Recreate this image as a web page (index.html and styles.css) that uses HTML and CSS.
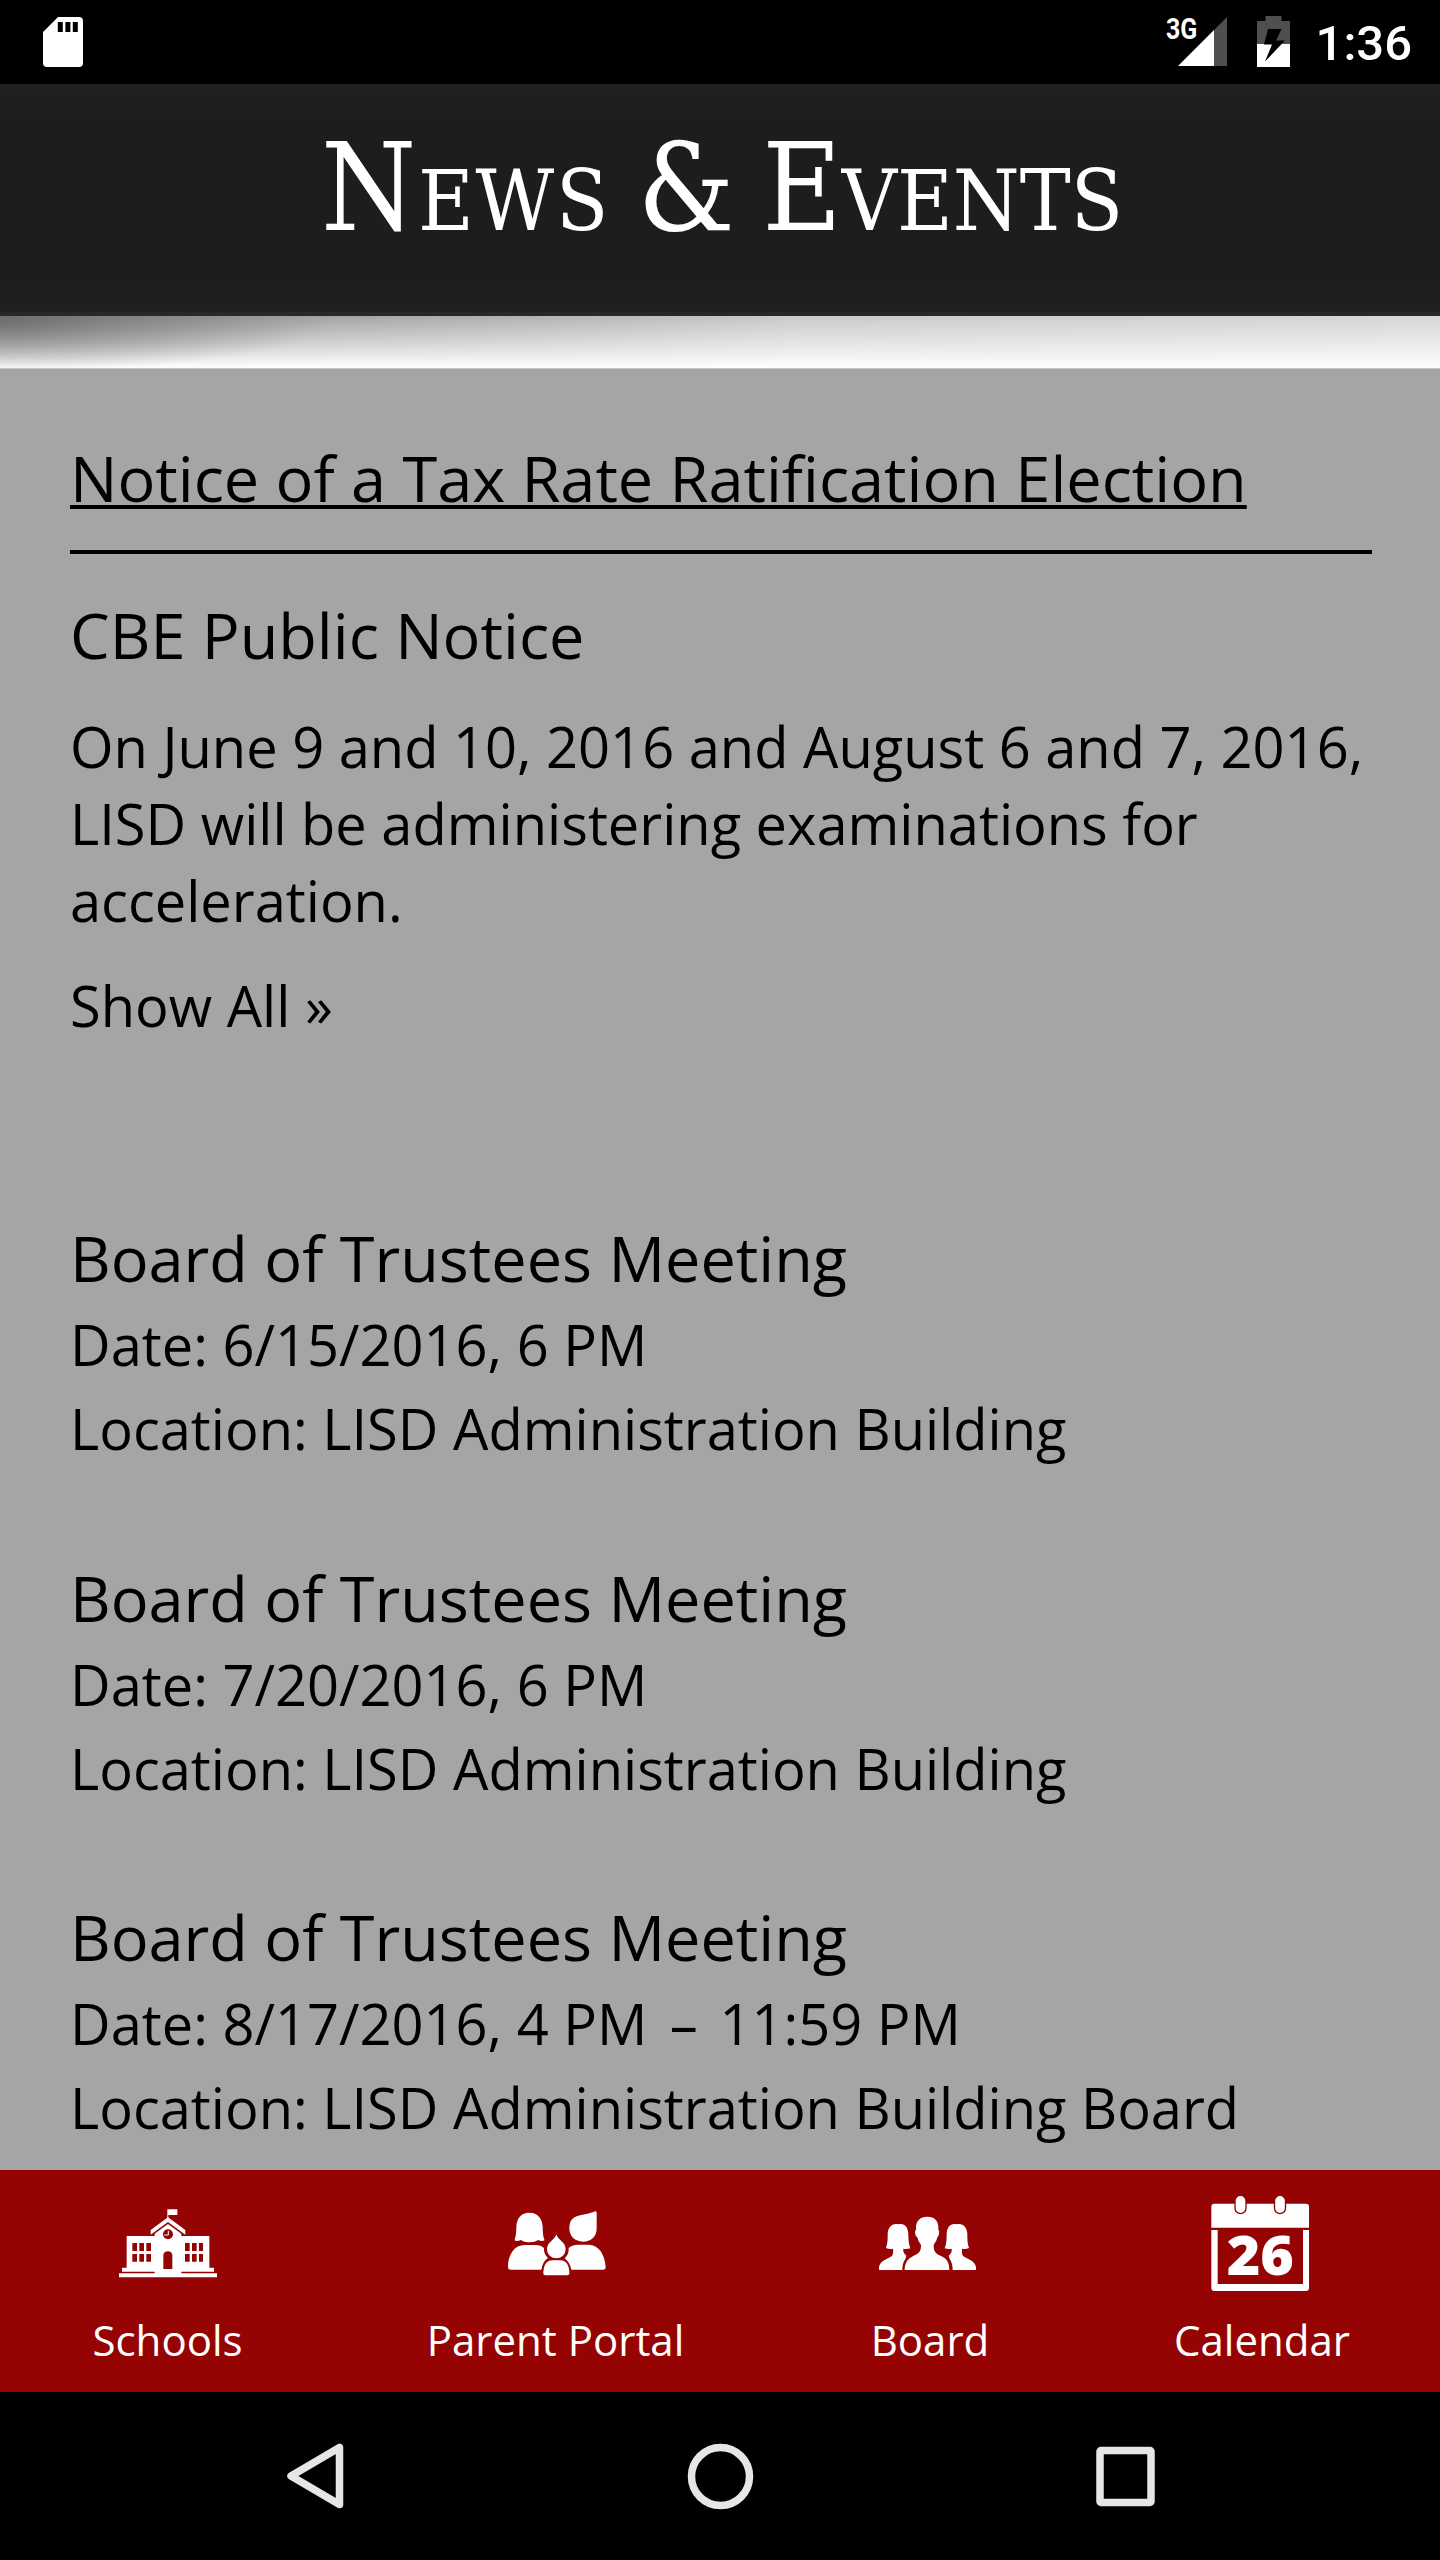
FILE: index.html
```html
<!DOCTYPE html>
<html lang="en">
<head>
<meta charset="utf-8">
<title>News &amp; Events</title>
<link rel="stylesheet" href="styles.css">
</head>
<body>
<div class="screen">
  <div class="status">
    <svg class="sd" viewBox="0 0 40 50" aria-hidden="true">
      <path fill="#fff" fill-rule="evenodd" d="M15 0H36a4 4 0 0 1 4 4V46a4 4 0 0 1-4 4H4a4 4 0 0 1-4-4V15ZM14.800 5v10h5V5ZM22.400 5v10h5V5ZM29.800 5v10h5V5Z"/>
    </svg>
    <div class="signal">
      <span class="net">3G</span>
      <svg class="bars" viewBox="0 0 49 49" aria-hidden="true">
        <path fill="#4f4f4f" d="M36 13 49 0V49H36Z"/>
        <path fill="#fff" d="M0 49 36 13V49Z"/>
      </svg>
    </div>
    <svg class="battery" viewBox="0 0 33 51" aria-hidden="true">
      <path fill="#4f4f4f" d="M8.500 0H24.500V5H33V28H0V5H8.500Z"/>
      <path fill="#fff" d="M0 28H33V51H0Z"/>
      <path fill="#000" d="M11 13H24.500L19 24.500H28L8 45.500 15 28.500H7Z"/>
    </svg>
    <span class="clock">1:36</span>
  </div>

  <header class="header"><h1><span class="first">News</span> &amp; Events</h1></header>
  <div class="band"></div>

  <main class="content">
    <h2 class="title"><a href="#">Notice of a Tax Rate Ratification Election</a></h2>
    <hr>
    <h2 class="title">CBE Public Notice</h2>
    <p class="body">On June 9 and 10, 2016 and August 6 and 7, 2016, LISD will be administering examinations for acceleration.</p>
    <p class="more">Show All »</p>

    <div class="events">
      <article>
        <h2 class="title">Board of Trustees Meeting</h2>
        <p>Date: 6/15/2016, 6 PM</p>
        <p>Location: LISD Administration Building</p>
      </article>
      <article>
        <h2 class="title">Board of Trustees Meeting</h2>
        <p>Date: 7/20/2016, 6 PM</p>
        <p>Location: LISD Administration Building</p>
      </article>
      <article>
        <h2 class="title">Board of Trustees Meeting</h2>
        <p>Date: 8/17/2016, 4 PM <span class="dash">–</span> 11:59 PM</p>
        <p>Location: LISD Administration Building Board</p>
      </article>
    </div>
  </main>

  <nav class="tabs">
    <a class="tab">
      <svg viewBox="114 42 300 300" aria-hidden="true">
        <g fill="#fff">
          <path d="M262 88H292V105H265V116H262Z"/>
          <path d="M264 112 316 150V164L264 126 212 164V150Z"/>
          <path d="M264 132 304 161V168H388V263H402V275H304V280H411V292H117V280H224V275H126V263H140V168H224V161Z"/>
        </g>
        <g fill="#960303">
          <circle cx="264" cy="163" r="15"/>
          <path d="M250 267V224a14 14 0 0 1 27 0V267Z"/>
          <path d="M157 189h14v24h-14zM178 189h14v24h-14zM199 189h14v24h-14zM157 222h14v23h-14zM178 222h14v23h-14zM199 222h14v23h-14zM315 189h14v24h-14zM336 189h14v24h-14zM357 189h12v24h-12zM315 222h14v23h-14zM336 222h14v23h-14zM357 222h12v23h-12z"/>
        </g>
        <path d="M265 152V165H253" fill="none" stroke="#fff" stroke-width="3"/>
      </svg>
      <span>Schools</span>
    </a>
    <a class="tab">
      <svg viewBox="78 42 300 300" aria-hidden="true">
        <g fill="#fff">
          <path d="M148 98C173 98 187 116 188 140C188 160 190 172 194 181Q184 185 175 180Q162 188 148 187Q134 188 122 180Q112 186 103 181C107 172 109 160 109 140C110 116 123 98 148 98Z"/>
          <path d="M84 262C84 222 104 195 134 195H166C177 195 186 199 192 204C191 218 196 227 204 234C193 241 187 252 184 269H91Q84 269 84 262Z"/>
          <path d="M346 94Q350 94 350 99V146C350 170 332 185 309 185C285 185 268 169 268 145C268 119 280 111 300 106Q325 101 340 96Q343 94 346 94Z"/>
          <path d="M377 262C375 222 355 194 326 194H294C281 194 272 198 266 204C267 218 262 227 254 235C264 243 271 253 274 269H370Q377 269 377 262Z"/>
          <path d="M229 163C233 180 257 186 257 208A28 27 0 0 1 201 208C201 186 225 180 229 163Z"/>
          <path d="M190 280C190 256 200 241 216 241H242C258 241 268 256 268 280Q268 286 262 286H196Q190 286 190 280Z"/>
        </g>
      </svg>
      <span>Parent Portal</span>
    </a>
    <a class="tab">
      <svg viewBox="87 42 300 300" aria-hidden="true">
        <g fill="#fff">
          <path d="M232 110C254 110 267 123 265 149C270 153 267 168 262 172C259 186 253 190 251 196C251 218 259 222 273 228C293 237 298 250 298 270H164C164 250 172 237 190 228C206 221 213 216 213 196C211 190 205 186 202 172C195 168 193 153 198 149C196 123 210 110 232 110Z"/>
          <path id="side" d="M145 133C167 128 175 146 175 165C175 182 177 196 181 205Q170 208 160 206C159 214 161 220 169 227L166 237C159 247 157 258 157 270H87V261C91 243 112 237 125 229Q131 222 129 206Q117 208 108 204C113 190 113 178 113 163C113 144 126 128 145 133Z"/>
          <use href="#side" transform="matrix(-1 0 0 1 465 0)"/>
        </g>
      </svg>
      <span>Board</span>
    </a>
    <a class="tab">
      <svg viewBox="93 42 300 300" aria-hidden="true">
        <path fill="#fff" d="M103 71H378Q387 71 387 80V143H94V80Q94 71 103 71Z"/>
        <path fill="#fff" d="M94 150H113V312H369V150H387V324Q387 333 378 333H103Q94 333 94 324Z"/>
        <g fill="#fff" stroke="#960303" stroke-width="4">
          <rect x="165" y="46" width="33" height="55" rx="16.500"/>
          <rect x="283.500" y="46" width="33" height="55" rx="16.500"/>
        </g>
        <text class="day" x="241" y="285" text-anchor="middle" textLength="202" lengthAdjust="spacingAndGlyphs">26</text>
      </svg>
      <span>Calendar</span>
    </a>
  </nav>

  <div class="keys">
    <svg viewBox="0 0 72 72" aria-hidden="true"><path d="M60.500 7.500V64.500L12 36Z"/></svg>
    <svg viewBox="0 0 72 72" aria-hidden="true"><circle cx="36.500" cy="36.500" r="29"/></svg>
    <svg viewBox="0 0 72 72" aria-hidden="true"><rect x="11" y="10.500" width="51" height="52" rx="1"/></svg>
  </div>
</div>
</body>
</html>
```
FILE: styles.css
```css
* { box-sizing: border-box; }

body {
  margin: 0;
  background: #000;
}

h1, h2, p { margin: 0; font-weight: 400; }

.screen {
  width: 1440px;
  height: 2560px;
  display: flex;
  flex-direction: column;
  overflow: hidden;
  font-family: "Open Sans", "Noto Sans", sans-serif;
  color: #000;
}

/* system status bar */
.status {
  height: 84px;
  flex: none;
  display: flex;
  align-items: flex-start;
  padding: 16px 28px 0 43px;
  background: #000;
  color: #fff;
  font-family: Roboto, sans-serif;
}
.sd { width: 40px; height: 50px; margin-top: 1px; }
.signal { display: flex; margin-left: auto; }
.net {
  width: 12px;
  font-size: 29px;
  font-weight: 700;
  line-height: 33px;
  margin-top: -3px;
  transform: scaleX(.86);
  transform-origin: 0 0;
}
.bars { width: 49px; height: 49px; margin-top: 1px; }
.battery { width: 33px; height: 51px; margin-left: 30px; }
.clock {
  margin-left: 25.500px;
  font-size: 49px;
  font-weight: 500;
  line-height: 56px;
}

.header {
  height: 232px;
  flex: none;
  padding-left: 4px;
  text-align: center;
  background: linear-gradient(#202020, #1d1d1d 15%, #1d1d1d 85%, #202020 98%, #282828 98.3%);
}
.header h1 {
  font-family: "DejaVu Serif Condensed", "DejaVu Serif", serif;
  font-stretch: condensed;
  font-variant: small-caps;
  font-size: 121px;
  line-height: 210px;
  word-spacing: -7px;
  color: #fff;
}
.first { letter-spacing: 1.800px; }

.band {
  height: 53px;
  flex: none;
  border-bottom: 1px solid #c4c4c4;
  background:
    radial-gradient(ellipse 330px 50px at 0 6px, rgba(95,95,95,.6), rgba(110,110,110,.4) 45%, rgba(150,150,150,0)),
    linear-gradient(to bottom, rgba(252,252,252,0), rgba(252,252,252,.5) 50%, #fcfcfc 97%),
    linear-gradient(to right, #7c7c7c, #8f8f8f 7%, #a0a0a0 20%, #b6b6b6 40%, #cacaca 55%, #d6d6d6 100%);
}

.content {
  height: 1801px;
  flex: none;
  padding: 67px 68px 0 70px;
  background: #a5a5a5;
}
.title { font-size: 63px; line-height: 84px; }
.title a {
  color: inherit;
  text-decoration: underline;
  text-decoration-thickness: 4px;
  text-underline-offset: 3px;
  text-decoration-skip-ink: none;
}
hr {
  height: 4px;
  margin: 30px 0 39px;
  border: 0;
  background: #000;
}
.body { margin-top: 31px; }
.body, .more { font-size: 56px; line-height: 77px; }
.more { margin-top: 28px; }
.events {
  display: flex;
  flex-direction: column;
  gap: 85.600px;
  margin-top: 172px;
  font-size: 56px;
  line-height: 84px;
}
.events .title { margin-bottom: 2px; }
.dash { margin: 0 7px 0 8px; }

.tabs {
  height: 222px;
  flex: none;
  display: grid;
  grid-template-columns: 335fr 441fr 306fr 358fr;
  background: #960303;
  color: #fff;
}
.tab {
  display: flex;
  flex-direction: column;
  align-items: center;
  padding-top: 24px;
  font-size: 42px;
  line-height: 58px;
}
.tab svg { width: 100px; height: 100px; margin-bottom: 17px; }
.tab:nth-child(n+3) span { padding-left: 2px; }
.day { font: 800 163px "Open Sans", sans-serif; fill: #fff; }

/* system navigation keys */
.keys {
  height: 168px;
  flex: none;
  display: grid;
  grid-template-columns: repeat(3, 405px);
  justify-content: center;
  justify-items: center;
  align-items: center;
  background: #000;
}
.keys svg {
  width: 72px;
  height: 72px;
  fill: none;
  stroke: #e6e6e6;
  stroke-width: 7.500;
  stroke-linejoin: round;
}
```
